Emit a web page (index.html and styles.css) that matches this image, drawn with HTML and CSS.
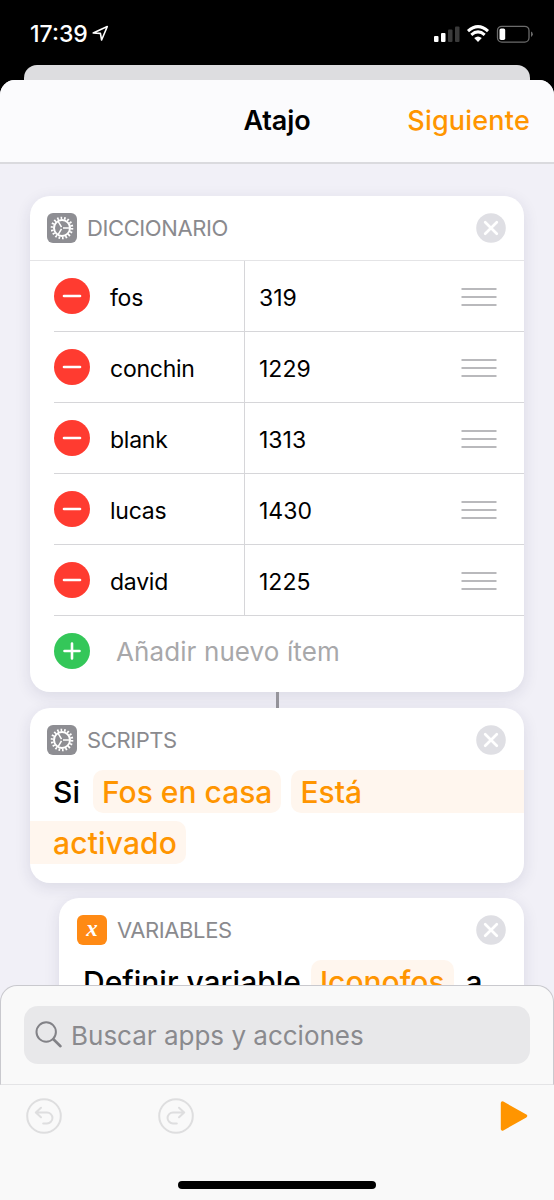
FILE: index.html
```
<!DOCTYPE html>
<html lang="es">
<head>
    <meta charset="UTF-8">
    <meta name="viewport" content="width=device-width, initial-scale=1.0">
    <title>Atajo</title>
    <link rel="stylesheet" href="styles.css">
</head>
<body>

    <!-- Shared icons -->
    <svg class="icon-defs" aria-hidden="true">
        <symbol id="gear" viewBox="0 0 30 30">
            <circle cx="15" cy="15" r="10" fill="none" stroke="#fff" stroke-width="2.6" stroke-dasharray="1.65 1.841"/>
            <circle cx="15" cy="15" r="8" fill="none" stroke="#fff" stroke-width="2"/>
            <path d="M16 15h7M14.5 14.1L11 8.1M14.5 15.9L11 21.9" stroke="#fff" stroke-width="1.5"/>
        </symbol>
        <symbol id="close" viewBox="0 0 30 30">
            <circle cx="15" cy="15" r="14.8" fill="#dfdfe4"/>
            <path d="M9.2 9.2l11.6 11.6M20.8 9.2L9.2 20.8" stroke="#fff" stroke-width="2.7" stroke-linecap="round"/>
        </symbol>
        <symbol id="minus" viewBox="0 0 36 36">
            <circle cx="18" cy="18" r="18" fill="#ff3b30"/>
            <path d="M10 18h16" stroke="#fff" stroke-width="2.6" stroke-linecap="round"/>
        </symbol>
        <symbol id="plus" viewBox="0 0 36 36">
            <circle cx="18" cy="18" r="18" fill="#34c759"/>
            <path d="M10.5 18h15M18 10.5v15" stroke="#fff" stroke-width="2.6" stroke-linecap="round"/>
        </symbol>
        <symbol id="handle" viewBox="0 0 36 20">
            <path d="M0.5 2h35M0.5 10h35M0.5 18h35" stroke="#b9b9bc" stroke-width="1.8"/>
        </symbol>
    </svg>

    <div class="screen">
        <!-- Status bar -->
        <div class="status-bar">
            <span class="time">17:39</span>
            <svg class="location" width="17" height="17" viewBox="0 0 17 17"><path d="M1.2 8L15.3 1.5L9.6 15L8.4 8.4Z" fill="none" stroke="#fff" stroke-width="1.6" stroke-linejoin="round"/></svg>
            <svg class="indicators" width="100" height="20" viewBox="0 0 100 20">
                <rect x="0" y="12" width="4.5" height="6" rx="1" fill="#fff"/>
                <rect x="7" y="9" width="4.5" height="9" rx="1" fill="#fff"/>
                <rect x="14" y="5.5" width="4.5" height="12.5" rx="1" fill="#3a3a3a"/>
                <rect x="21" y="2.5" width="4.5" height="15.5" rx="1" fill="#3a3a3a"/>
                <path d="M34 7.2Q44 -2 54 7.2M37.3 10.8Q44 5 50.7 10.8" fill="none" stroke="#fff" stroke-width="3"/>
                <path d="M40.2 14Q44 11 47.8 14L44 18Z" fill="#fff"/>
                <rect x="63.5" y="2.3" width="31.5" height="15.8" rx="4.3" fill="none" stroke="#6b6b6b" stroke-width="1.3"/>
                <rect x="65.5" y="4.5" width="5.7" height="11.4" rx="1.6" fill="#fff"/>
                <path d="M97 7.5q1.8 .8 1.8 2.7t-1.8 2.7z" fill="#6b6b6b"/>
            </svg>
        </div>
        <div class="back-sheet"></div>

        <div class="sheet">
            <div class="nav-bar">
                <span></span>
                <h1>Atajo</h1>
                <a class="next">Siguiente</a>
            </div>

            <div class="actions">
                <!-- Dictionary -->
                <div class="card">
                    <div class="card-header">
                        <svg class="app-icon"><use href="#gear"/></svg>
                        <span class="label">DICCIONARIO</span>
                        <svg class="close"><use href="#close"/></svg>
                    </div>
                    <div class="rows">
                        <div class="row">
                            <div class="key"><svg class="round"><use href="#minus"/></svg><span>fos</span></div>
                            <div class="value"><span>319</span><svg class="handle"><use href="#handle"/></svg></div>
                        </div>
                        <div class="row">
                            <div class="key"><svg class="round"><use href="#minus"/></svg><span>conchin</span></div>
                            <div class="value"><span>1229</span><svg class="handle"><use href="#handle"/></svg></div>
                        </div>
                        <div class="row">
                            <div class="key"><svg class="round"><use href="#minus"/></svg><span>blank</span></div>
                            <div class="value"><span>1313</span><svg class="handle"><use href="#handle"/></svg></div>
                        </div>
                        <div class="row">
                            <div class="key"><svg class="round"><use href="#minus"/></svg><span>lucas</span></div>
                            <div class="value"><span>1430</span><svg class="handle"><use href="#handle"/></svg></div>
                        </div>
                        <div class="row">
                            <div class="key"><svg class="round"><use href="#minus"/></svg><span>david</span></div>
                            <div class="value"><span>1225</span><svg class="handle"><use href="#handle"/></svg></div>
                        </div>
                        <div class="add-row">
                            <svg class="round"><use href="#plus"/></svg><span>Añadir nuevo ítem</span>
                        </div>
                    </div>
                </div>
                <div class="connector"></div>

                <!-- If -->
                <div class="card script-card">
                    <div class="card-header plain">
                        <svg class="app-icon"><use href="#gear"/></svg>
                        <span class="label">SCRIPTS</span>
                        <svg class="close"><use href="#close"/></svg>
                    </div>
                    <div class="line">
                        <span class="si">Si</span>
                        <span class="pill">Fos en casa</span>
                        <span class="pill open-right">Está</span>
                    </div>
                    <div class="line second">
                        <span class="pill open-left">activado</span>
                    </div>
                </div>

                <!-- Set variable -->
                <div class="card nested">
                    <div class="card-header plain">
                        <span class="app-icon variable">x</span>
                        <span class="label">VARIABLES</span>
                        <svg class="close"><use href="#close"/></svg>
                    </div>
                    <div class="line">
                        <span class="define">Definir variable</span>
                        <span class="pill">Iconofos</span>
                        <span class="to">a</span>
                    </div>
                </div>
            </div>

            <!-- Search drawer -->
            <div class="drawer">
                <div class="search">
                    <svg width="28" height="28" viewBox="0 0 28 28" fill="none" stroke="#828287" stroke-linecap="round"><circle cx="11.2" cy="11" r="9.7" stroke-width="2"/><path d="M18.4 18.2l7.1 7" stroke-width="2.6"/></svg>
                    <span>Buscar apps y acciones</span>
                </div>
            </div>
            <div class="toolbar">
                <div class="tools">
                    <svg width="36" height="36" viewBox="0 0 36 36" fill="none" stroke="#dededf" stroke-width="2" stroke-linecap="round" stroke-linejoin="round"><circle cx="18" cy="18" r="16.8"/><path d="M15 9.7L9.8 14.5L15 19.3M9.8 14.5H21a5.4 5.4 0 0 1 0 10.9H17.2"/></svg>
                    <svg class="redo" width="36" height="36" viewBox="0 0 36 36" fill="none" stroke="#dededf" stroke-width="2" stroke-linecap="round" stroke-linejoin="round"><circle cx="18" cy="18" r="16.8"/><path d="M21 9.7L26.2 14.5L21 19.3M26.2 14.5H15a5.4 5.4 0 0 0 0 10.9H18.8"/></svg>
                    <svg class="play" width="28" height="32" viewBox="0 0 28 32"><path d="M2.5 3L25.5 16L2.5 29Z" fill="#ff9500" stroke="#ff9500" stroke-width="3.4" stroke-linejoin="round"/></svg>
                </div>
                <div class="home-indicator"></div>
            </div>
        </div>
    </div>

</body>
</html>
```

FILE: styles.css
```
* {
    box-sizing: border-box;
}
body {
    margin: 0;
    background: #000;
    font-family: Inter, "Liberation Sans", sans-serif;
    color: #000;
}
svg {
    display: block;
    flex: none;
}
.icon-defs {
    display: none;
}
.screen {
    display: flex;
    flex-direction: column;
    width: 554px;
    height: 1200px;
    overflow: hidden;
    background: #000;
}

/* Status bar */
.status-bar {
    display: flex;
    height: 65px;
    padding: 24px 20px 0 30px;
    color: #fff;
}
.time {
    width: 62px;
    font-size: 23px;
    line-height: 20px;
    font-weight: 500;
    letter-spacing: 0;
    white-space: nowrap;
}
.location {
    margin-top: 1px;
}
.indicators {
    margin-left: auto;
}
.back-sheet {
    height: 15px;
    margin: 0 24px;
    border-radius: 13px 13px 0 0;
    background: #dddde0;
}

/* Sheet */
.sheet {
    display: flex;
    flex-direction: column;
    flex: 1;
    min-height: 0;
    overflow: hidden;
    border-radius: 15px 15px 0 0;
    background: #f1f0f7;
}
.nav-bar {
    display: grid;
    grid-template-columns: 1fr auto 1fr;
    align-items: center;
    height: 84px;
    padding: 0 24px 2px;
    border-bottom: 2px solid #dadade;
    background: #fbfbfd;
}
h1 {
    margin: 0;
    font-size: 27px;
    font-weight: 600;
    letter-spacing: -0.1px;
}
.next {
    justify-self: end;
    color: #ff9500;
    font-size: 27px;
    font-weight: 500;
    letter-spacing: 0.2px;
}
.actions {
    flex: 1;
    min-height: 0;
    padding: 32px 30px 0;
    overflow: hidden;
}

/* Cards */
.card {
    border-radius: 20px;
    background: #fff;
    box-shadow: 0 4px 16px rgba(40, 35, 80, 0.11);
}
.card-header {
    display: flex;
    align-items: center;
    height: 65px;
    padding: 0 18px 0 17px;
    border-bottom: 1px solid #e4e4e6;
}
.card-header.plain {
    height: 62px;
    padding-top: 2px;
    border-bottom: none;
}
.app-icon {
    width: 30px;
    height: 30px;
    border-radius: 6px;
    background: #8e8e93;
}
.variable {
    background: #ff8a14;
    color: #fff;
    font: italic bold 23px/27px "Liberation Serif", serif;
    text-align: center;
}
.label {
    margin-left: 10px;
    color: #8a8a8e;
    font-size: 22px;
    letter-spacing: -0.4px;
}
.close {
    width: 30px;
    height: 30px;
    margin-left: auto;
}
.rows {
    padding-left: 24px;
}
.row {
    display: flex;
    height: 71px;
    border-bottom: 1px solid #d6d6d9;
    font-size: 23px;
}
.key, .value, .add-row {
    display: flex;
    align-items: center;
}
.key {
    width: 191px;
    border-right: 1px solid #d6d6d9;
    letter-spacing: -0.25px;
}
.key span, .value span {
    padding-top: 3px;
}
.value {
    flex: 1;
    padding: 0 27px 0 14px;
    justify-content: space-between;
}
.round {
    width: 36px;
    height: 36px;
    margin-right: 20px;
}
.handle {
    width: 36px;
    height: 20px;
    margin-top: 2px;
}
.add-row {
    height: 76px;
    padding-bottom: 5px;
    color: #a8a8aa;
    font-size: 26px;
    letter-spacing: 0.1px;
}
.add-row .round {
    margin: -1px 26px 0 0;
}
.connector {
    width: 3px;
    height: 16px;
    margin: 0 auto;
    background: #96959b;
}
.script-card {
    height: 175px;
    margin-bottom: 15px;
}
.nested {
    height: 200px;
    margin-left: 29px;
}
.nested .card-header {
    padding-left: 18px;
}
.line {
    display: flex;
    height: 43px;
    padding-left: 23px;
    font-size: 30px;
    line-height: 45px;
    font-weight: 500;
    white-space: nowrap;
}
.line.second {
    margin-top: 8px;
    padding-left: 0;
}
.pill {
    height: 43px;
    margin-left: 10px;
    padding: 0 9px;
    border-radius: 10px;
    background: #fff6ee;
    color: #ff9500;
}
.si {
    width: 30px;
}
.open-right {
    flex: 1;
    border-radius: 10px 0 0 10px;
}
.open-left {
    margin-left: 0;
    padding-left: 23px;
    letter-spacing: 0.15px;
    border-radius: 0 10px 10px 0;
}
.define {
    margin-left: 1px;
}
.to {
    margin-left: 12px;
}

/* Bottom drawer, its rounded corners lie over the list */
.drawer {
    position: relative;
    height: 100px;
    margin-top: -20px;
    padding: 20px 23px 0;
    border: 1px solid #c9c9ce;
    border-bottom-color: #e4e4e6;
    border-radius: 17px 17px 0 0;
    background: #f9f9f9;
}
.search {
    display: flex;
    align-items: center;
    height: 58px;
    padding-left: 11px;
    border-radius: 14px;
    background: #e8e8ea;
    color: #8a8a8e;
    font-size: 26px;
}
.search span {
    margin-left: 8px;
}
.toolbar {
    height: 115px;
    background: #f9f9f9;
}
.tools {
    display: flex;
    align-items: center;
    height: 62px;
    padding: 0 26px;
}
.redo {
    margin-left: 96px;
}
.play {
    margin-left: auto;
}
.home-indicator {
    width: 198px;
    height: 8px;
    margin: 34px auto 0;
    border-radius: 4px;
    background: #000;
}
```
